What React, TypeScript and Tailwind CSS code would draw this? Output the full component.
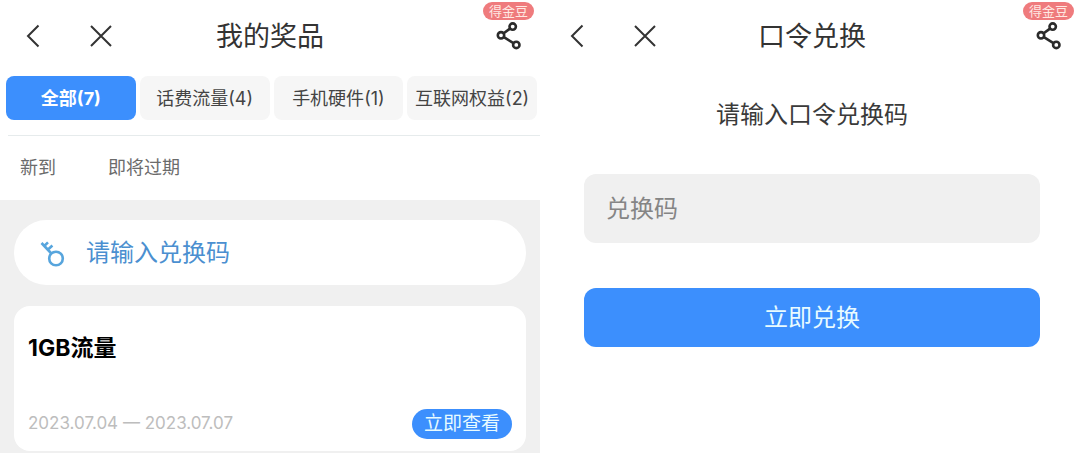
import { useState } from 'react'
import clsx from 'clsx'

const TABS = [
  { id: 'all', label: '全部', count: 7 },
  { id: 'data', label: '话费流量', count: 4 },
  { id: 'hardware', label: '手机硬件', count: 1 },
  { id: 'internet', label: '互联网权益', count: 2 },
]

const PRIZES = [{ id: 1, name: '1GB流量', from: '2023.07.04', to: '2023.07.07' }]

function BackIcon() {
  return (
    <svg width="14" height="24" viewBox="0 0 14 24" fill="none" stroke="#333" strokeWidth="2">
      <path d="M12.5 1.5 2 12l10.5 10.5" />
    </svg>
  )
}

function CloseIcon() {
  return (
    <svg width="24" height="24" viewBox="0 0 24 24" fill="none" stroke="#333" strokeWidth="2">
      <path d="M2 2l20 20M22 2 2 22" />
    </svg>
  )
}

function ShareIcon() {
  return (
    <svg width="26" height="28" viewBox="0 0 26 28" fill="none" stroke="#2b2b2b" strokeWidth="2.6">
      <circle cx="17.7" cy="4.6" r="3.2" />
      <circle cx="6" cy="13.3" r="3.2" />
      <circle cx="21.3" cy="22.9" r="3.2" />
      <path d="M15 6.6 8.7 11.3M8.9 15.1l9.5 6" />
    </svg>
  )
}

function KeyIcon() {
  return (
    <svg width="26" height="28" viewBox="0 0 26 28" fill="none" stroke="#57a5dd" strokeWidth="2.6">
      <circle cx="16" cy="19.5" r="6.8" />
      <path d="M1.5 4l9.9 10.5M4.2 7 8 3.4M7.8 10.8l4.6-4.3" />
    </svg>
  )
}

function Header({ title }: { title: string }) {
  return (
    <header className="relative flex h-[72px] items-center justify-center">
      <div className="absolute inset-y-0 left-[26px] flex items-center gap-[49px]">
        <button type="button" aria-label="返回">
          <BackIcon />
        </button>
        <button type="button" aria-label="关闭">
          <CloseIcon />
        </button>
      </div>
      <h1 className="pt-0.5 text-[27px] leading-9 text-[#333]">{title}</h1>
      <div className="absolute right-1.5 top-0.5 flex flex-col items-center gap-0.5">
        <span className="rounded-full bg-[#ef7b7d] px-1.5 text-[13px] leading-[18px] text-[#ffe9e3]">得金豆</span>
        <button type="button" aria-label="分享">
          <ShareIcon />
        </button>
      </div>
    </header>
  )
}

function PrizePanel() {
  const [tab, setTab] = useState('all')

  return (
    <section className="flex flex-col">
      <Header title="我的奖品" />

      {/* Category tabs */}
      <nav className="grid grid-cols-4 gap-1 pl-1.5 pr-[3px] pt-1">
        {TABS.map((t) => (
          <button
            key={t.id}
            type="button"
            onClick={() => setTab(t.id)}
            className={clsx(
              'h-11 whitespace-nowrap rounded-lg text-[18px]',
              tab === t.id ? 'bg-[#3c8ffd] font-bold text-white' : 'bg-[#f6f6f6] text-[#444]',
            )}
          >
            {t.label}({t.count})
          </button>
        ))}
      </nav>

      {/* Sort options */}
      <div className="ml-2 mt-[15px] flex h-[65px] items-center gap-[52px] border-t border-[#e6ebec] pb-0.5 pl-3 text-[18px] text-[#6b6b6b]">
        <button type="button">新到</button>
        <button type="button">即将过期</button>
      </div>

      <div className="flex flex-1 flex-col gap-[21px] bg-[#f0f0f0] px-3.5 pb-0.5 pt-5">
        <label className="flex h-[65px] items-center gap-5 rounded-full bg-white px-[26px]">
          <KeyIcon />
          <input
            type="text"
            aria-label="兑换码"
            placeholder="请输入兑换码"
            className="min-w-0 flex-1 bg-transparent text-[24px] text-[#4b8fd0] outline-none placeholder:text-[#4b8fd0]"
          />
        </label>

        {PRIZES.map((p) => (
          <article key={p.id} className="flex h-[145px] flex-col justify-between rounded-2xl bg-white px-3.5 pb-3 pt-[26px]">
            <h2 className="text-[23px] font-bold leading-8 text-black">{p.name}</h2>
            <div className="flex items-center justify-between">
              <p className="text-[17px] text-[#bdbdbd]">
                {p.from} — {p.to}
              </p>
              <button type="button" className="rounded-full bg-[#3c8ffd] px-3 text-[19px] leading-[30px] text-[#e8fbff]">
                立即查看
              </button>
            </div>
          </article>
        ))}
      </div>
    </section>
  )
}

function RedeemPanel() {
  return (
    <section className="flex flex-col pl-1">
      <Header title="口令兑换" />

      <form className="flex flex-col px-10 pt-[25px]" onSubmit={(e) => e.preventDefault()}>
        <label htmlFor="code" className="text-center text-[24px] leading-9 text-[#3a3a3a]">
          请输入口令兑换码
        </label>
        <input
          id="code"
          type="text"
          placeholder="兑换码"
          className="mt-[41px] h-[69px] w-full rounded-xl bg-[#f0f0f0] px-[22px] text-[24px] text-[#333] outline-none placeholder:text-[#858585]"
        />
        <button type="submit" className="mt-[45px] h-[59px] rounded-xl bg-[#3c8ffd] text-[24px] text-[#e8fbff]">
          立即兑换
        </button>
      </form>
    </section>
  )
}

export default function App() {
  return (
    <main className="grid min-h-screen grid-cols-2 bg-white font-[Inter,'Noto_Sans_CJK_SC',sans-serif]">
      <PrizePanel />
      <RedeemPanel />
    </main>
  )
}
